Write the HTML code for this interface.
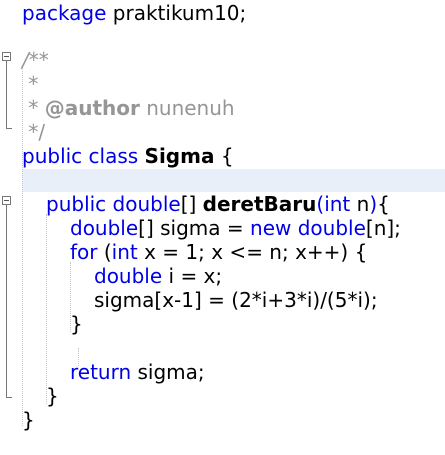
<!DOCTYPE html>
<html><head><style>
body{margin:0;width:445px;height:455px;background:#fff;position:relative;overflow:hidden;font-family:"DejaVu Sans",sans-serif;font-size:20px;}
.l{position:absolute;left:22px;white-space:pre;height:24px;line-height:24px;color:#000;}
.k{color:#0000e6}
.c{color:#969696}
.b{font-weight:bold}
.hl{position:absolute;left:22px;top:169px;width:423px;height:23px;background:#e9eff8}
.g{position:absolute;border-left:1px dotted #c8c8c8;width:0}
.fb{position:absolute;width:7px;height:7px;border:1px solid #777;background:#fff}
.fb:after{content:"";position:absolute;left:1px;top:3px;width:5px;height:1px;background:#555}
.fl{position:absolute;background:#777}
</style></head><body>
<div class="hl"></div>
<div class="g" style="left:22px;top:66px;height:360px"></div>
<div class="g" style="left:46px;top:214px;height:190px"></div>
<div class="g" style="left:70px;top:262px;height:70px"></div>
<div class="g" style="left:78px;top:348px;height:18px"></div>
<div class="fb" style="left:2px;top:52px"></div>
<div class="fl" style="left:6px;top:61px;width:1px;height:68px"></div>
<div class="fl" style="left:6px;top:128px;width:6px;height:1px"></div>
<div class="fb" style="left:2px;top:196px"></div>
<div class="fl" style="left:6px;top:205px;width:1px;height:193px"></div>
<div class="fl" style="left:6px;top:397px;width:6px;height:1px"></div>
<div class="l" style="top:1px"><span class="k">package</span> praktikum10;</div>
<div class="l c" style="top:48px"><i>/**</i></div>
<div class="l c" style="top:72px"> *</div>
<div class="l c" style="top:96px"> * <b>@author</b> nunenuh</div>
<div class="l c" style="top:120px"> */</div>
<div class="l" style="top:144px"><span class="k">public class</span> <b>Sigma</b> {</div>
<div class="l" style="top:192px;left:46px"><span class="k">public double</span>[] <b>deretBaru</b><span class="k">(int</span> n<span class="k">)</span>{</div>
<div class="l" style="top:216px;left:70px"><span class="k">double</span>[] sigma = <span class="k">new double</span>[n];</div>
<div class="l" style="top:240px;left:70px"><span class="k">for</span> (<span class="k">int</span> x = 1; x &lt;= n; x++) {</div>
<div class="l" style="top:264px;left:94px"><span class="k">double</span> i = x;</div>
<div class="l" style="top:288px;left:94px">sigma[x-1] = (2*i+3*i)/(5*i);</div>
<div class="l" style="top:312px;left:70px">}</div>
<div class="l" style="top:360px;left:70px"><span class="k">return</span> sigma;</div>
<div class="l" style="top:384px;left:46px">}</div>
<div class="l" style="top:408px">}</div>
</body></html>
